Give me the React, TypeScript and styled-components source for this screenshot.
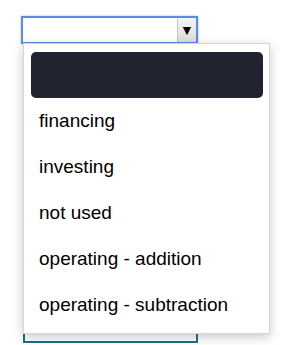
import { FC } from 'react';
import styled, { createGlobalStyle } from 'styled-components';

const options = [
    '',
    'financing',
    'investing',
    'not used',
    'operating - addition',
    'operating - subtraction',
];

const App: FC = () => {
    return (
        <>
            <GlobalStyle />
            <SPage>
                <SSelect>
                    <SValue />
                    <SArrow>▼</SArrow>
                </SSelect>
                <SCard />
                <SMenu>
                    {options.map((o, i) => (
                        <SItem key={i} active={i === 0}>{o}</SItem>
                    ))}
                </SMenu>
            </SPage>
        </>
    )
}

export default App

const GlobalStyle = createGlobalStyle`
    body {
        margin: 0;
        background: #ffffff;
        font-family: "Liberation Sans", Arial, sans-serif;
    }
`
const SPage = styled.div`
    position: relative;
    width: 286px;
    height: 345px;
    padding: 16px 0 0 21px;
    box-sizing: border-box;
    overflow: hidden;
`
const SSelect = styled.div`
    width: 177px;
    height: 28px;
    box-sizing: border-box;
    border: 2px solid #5b8be4;
    box-shadow: 0 0 2px rgba(91, 139, 228, 0.6);
    background: #ffffff;
    display: flex;
    align-items: stretch;
`
const SValue = styled.div`
    flex: 1;
`
const SArrow = styled.div`
    width: 18px;
    background: linear-gradient(#f4f4f4, #dcdcdc);
    border-left: 1px solid #c8c8c8;
    display: flex;
    align-items: center;
    justify-content: center;
    font-size: 14px;
    color: #000000;
`
const SCard = styled.div`
    margin-left: 2px;
    width: 175px;
    height: 299px;
    box-sizing: border-box;
    border: 2px solid #1b6f8f;
    border-top: none;
`
const SMenu = styled.ul`
    position: absolute;
    left: 23px;
    top: 43px;
    width: 247px;
    height: 291px;
    box-sizing: border-box;
    margin: 0;
    padding: 8px 6px 7px 7px;
    list-style: none;
    background: #ffffff;
    border: 1px solid #d6d6d6;
    box-shadow: 0 3px 10px rgba(0, 0, 0, 0.22);
`
const SItem = styled.li<{ active?: boolean }>`
    height: 46px;
    line-height: 45px;
    padding-left: 8px;
    font-size: 19px;
    color: #000000;
    border-radius: 5px;
    background: ${p => p.active ? '#1f2430' : 'transparent'};
    white-space: nowrap;
`
